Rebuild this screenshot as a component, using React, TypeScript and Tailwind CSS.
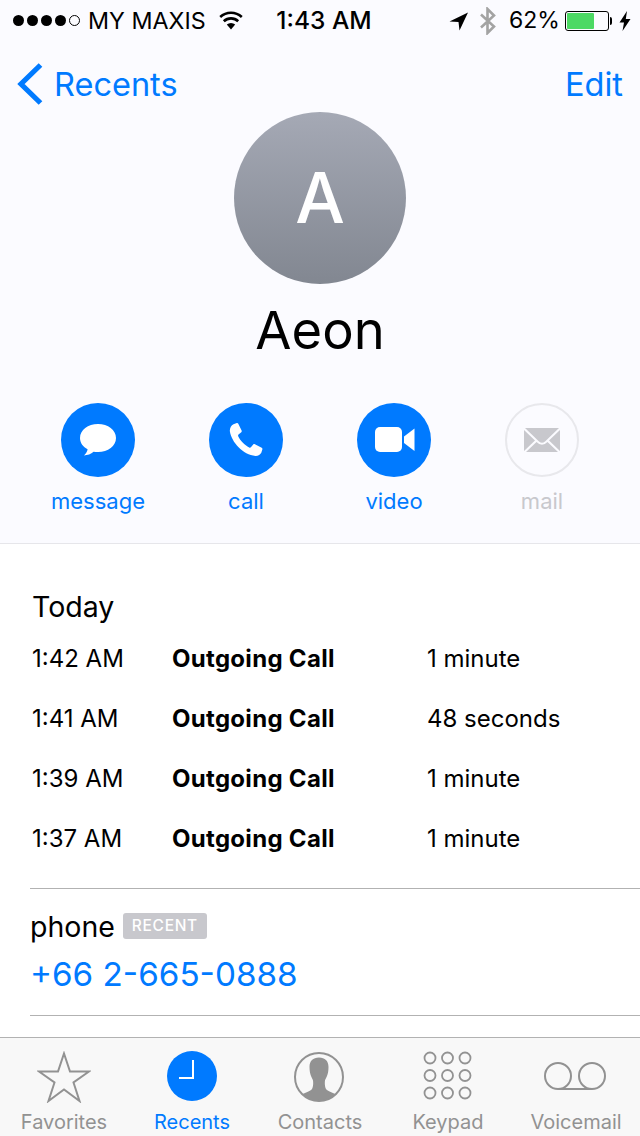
import React from 'react';

const calls = [
  { time: '1:42 AM', duration: '1 minute' },
  { time: '1:41 AM', duration: '48 seconds' },
  { time: '1:39 AM', duration: '1 minute' },
  { time: '1:37 AM', duration: '1 minute' },
];

function StatusBar() {
  return (
    <div className="flex h-[41px] items-center text-[23.3px] leading-none text-black">
      <div className="flex w-[270px] items-center pl-[13px]">
        <div className="flex gap-[3px]">
          {[0, 1, 2, 3].map((i) => (
            <span key={i} className="h-[11px] w-[11px] rounded-full bg-black" />
          ))}
          <span className="h-[11px] w-[11px] rounded-full border border-black" />
        </div>
        <span className="ml-[8px] whitespace-nowrap">MY MAXIS</span>
        <svg className="ml-[12px]" width="26" height="20" viewBox="0 0 26 20">
          <path d="M13 19.500 8.800 14.600a6.200 6.200 0 0 1 8.400 0Z" fill="#000" />
          <path d="M5.800 11.200a10.500 10.500 0 0 1 14.400 0M2.200 7a16 16 0 0 1 21.600 0" fill="none" stroke="#000" strokeWidth="2.600" />
        </svg>
      </div>
      <span className="w-[108px] text-center text-[24.5px] font-medium whitespace-nowrap">1:43 AM</span>
      <div className="flex flex-1 items-center">
        <svg className="ml-[71px]" width="20" height="20" viewBox="0 0 20 20">
          <path d="M19 1.500 0.500 10.500 9.500 11 10.500 19.500Z" fill="#000" />
        </svg>
        <svg className="ml-[9px]" width="20" height="28" viewBox="0 0 20 28">
          <path d="M3 7.500 16 19.500 9.500 26V2L16 8.500 3 20.500" fill="none" stroke="#a3a3a3" strokeWidth="2.600" />
        </svg>
        <span className="ml-[11px] text-[23px]">62%</span>
        <div className="ml-[5px] h-[20px] w-[44px] rounded-[3px] border border-black p-[1px]">
          <div className="h-full w-[27px] rounded-[1px] bg-[#4cd964]" />
        </div>
        <span className="ml-[1px] h-[8px] w-[2px] rounded-r-full bg-black" />
        <svg className="ml-[7px]" width="12" height="20" viewBox="0 0 12 20">
          <path d="M8 0 0.500 11.500H5L3.500 20 11.500 8H6.800Z" fill="#000" />
        </svg>
      </div>
    </div>
  );
}

function ActionButton({ label, disabled, children }: { label: string; disabled?: boolean; children: React.ReactNode }) {
  return (
    <div className="flex w-[148px] flex-col items-center">
      <div
        className={
          disabled
            ? 'flex h-[74px] w-[74px] items-center justify-center rounded-full border-2 border-[#e8e8ec]'
            : 'flex h-[74px] w-[74px] items-center justify-center rounded-full bg-[#007aff]'
        }
      >
        {children}
      </div>
      <span className={disabled ? 'mt-[11px] text-[22px] leading-[27px] text-[#c8c8cd]' : 'mt-[11px] text-[22px] leading-[27px] text-[#007aff]'}>
        {label}
      </span>
    </div>
  );
}

function TabItem({ label, active, children }: { label: string; active?: boolean; children: React.ReactNode }) {
  return (
    <div className="flex w-[128px] flex-col items-center">
      <div className="flex h-[72px] items-start justify-center pt-[13px]">{children}</div>
      <span className={active ? 'text-[20px] leading-[24px] whitespace-nowrap text-[#007aff]' : 'text-[20px] leading-[24px] whitespace-nowrap text-[#929292]'}>
        {label}
      </span>
    </div>
  );
}

export default function App() {
  return (
    <div className="flex h-[1136px] w-[640px] flex-col overflow-hidden bg-white font-['Inter',sans-serif]">
      <div className="h-[544px] border-b border-[#e6e6ea] bg-[#fbfbff]">
        <StatusBar />
        <div className="flex h-[71px] items-end justify-between px-[17px] pb-[6px] text-[32.5px] leading-[42px] text-[#007aff]">
          <div className="flex items-end">
            <svg className="mb-[1px]" width="26" height="42" viewBox="0 0 26 42">
              <path d="M23.500 2 4 21l19.500 19" fill="none" stroke="#007aff" strokeWidth="5.200" />
            </svg>
            <span className="ml-[11px]">Recents</span>
          </div>
          <span>Edit</span>
        </div>
        <div className="flex flex-col items-center">
          <div className="flex h-[172px] w-[172px] items-center justify-center rounded-full bg-gradient-to-b from-[#a5a9b5] to-[#828791] text-[70px] leading-none font-medium text-white">
            A
          </div>
          <div className="mt-[12px] text-[52.5px] leading-[68px] text-black">Aeon</div>
        </div>
        <div className="mt-[39px] flex pl-[24px]">
          <ActionButton label="message">
            <svg width="36" height="32" viewBox="0 0 36 32">
              <path d="M18 0C8 0 0 6 0 14c0 5 3.200 9 7.600 11.200-.4 2.200-1.600 4.400-3.600 6.200 3.400 0 7-1.400 9.600-3.600 1.400.2 2.900.2 4.400.2 10 0 18-6 18-14S28 0 18 0Z" fill="#fff" />
            </svg>
          </ActionButton>
          <ActionButton label="call">
            <svg width="34" height="34" viewBox="0 0 34 34">
              <path d="M4.500 1.200 7.800.1c.6-.2 1.200.1 1.500.6l3.300 6.900c.3.600.1 1.200-.3 1.600L9.500 11.600c-.5.500-.5 1.100-.3 1.700 1.800 4 6.500 9 11 11.200.6.300 1.300.2 1.700-.3l2.300-2.700c.4-.5 1.100-.6 1.700-.3l6.800 3.600c.6.300.9.900.7 1.500l-1.100 3.400C31.700 31.200 29 33 26.500 32.900 14 32 2.500 19 .9 8.500.5 5.500 2 2.500 4.500 1.200Z" fill="#fff" />
            </svg>
          </ActionButton>
          <ActionButton label="video">
            <svg className="ml-[2px]" width="40" height="26" viewBox="0 0 40 26">
              <rect x="0" y="0" width="27" height="25" rx="5" fill="#fff" />
              <path d="M29 9.500 39.500 1.500V24L29 16Z" fill="#fff" />
            </svg>
          </ActionButton>
          <ActionButton label="mail" disabled>
            <svg width="36" height="24" viewBox="0 0 36 24">
              <path d="M1 0H35L21 13.500Q18 16 15 13.500ZM0 2V23L11 12.500ZM36 2V23L25 12.500ZM2 24 12.500 14Q18 19.500 23.500 14L34 24Z" fill="#c8c8cd" />
            </svg>
          </ActionButton>
        </div>
      </div>

      <div className="flex-1 pl-[30px]">
        <div className="mt-[44px] pl-[2px] text-[28.5px] leading-[38px] text-black">Today</div>
        <div className="mt-[3px] pl-[2px]">
          {calls.map((call) => (
            <div key={call.time} className="flex h-[60px] items-center text-[24px] text-black">
              <span className="w-[140px]">{call.time}</span>
              <span className="w-[255px] font-bold tracking-[0.3px]">Outgoing Call</span>
              <span>{call.duration}</span>
            </div>
          ))}
        </div>
        <div className="mt-[19px] h-[128px] border-t border-b border-[#b2b2b2]">
          <div className="mt-[20px] flex items-center">
            <span className="text-[28.5px] leading-[36px] text-black">phone</span>
            <span className="mt-[-2px] ml-[8px] w-[84px] rounded-[3px] bg-[#c8c8cd] text-center text-[15.5px] leading-[26px] font-medium tracking-[0.7px] text-white">RECENT</span>
          </div>
          <div className="mt-[7px] text-[33.25px] leading-[44px] text-[#007aff]">+66 2-665-0888</div>
        </div>
      </div>

      <div className="flex h-[99px] border-t border-[#b2b2b2] bg-[#f8f8f8]">
        <TabItem label="Favorites">
          <svg width="54" height="52" viewBox="0 0 54 52">
            <path d="M27 2.500 33 20.500H52L36.500 31.500 42.500 50 27 38.500 11.500 50 17.500 31.500 2 20.500H21Z" fill="none" stroke="#929292" strokeWidth="2" />
          </svg>
        </TabItem>
        <TabItem label="Recents" active>
          <div className="flex h-[50px] w-[50px] items-start justify-center rounded-full bg-[#007aff]">
            <svg width="50" height="50" viewBox="0 0 50 50">
              <path d="M26 9V27H12" fill="none" stroke="#fff" strokeWidth="2" />
            </svg>
          </div>
        </TabItem>
        <TabItem label="Contacts">
          <svg className="-ml-[2px]" width="52" height="52" viewBox="0 0 52 52">
            <defs>
              <clipPath id="contact-clip">
                <circle cx="26" cy="26" r="24" />
              </clipPath>
            </defs>
            <path clipPath="url(#contact-clip)" d="M26 6.500c6 0 9.500 3.500 9.500 9.500 0 3.500-.5 6.500-1.500 9-.7 2-1.700 3-2 4.500-.4 3-.2 6 1 8.500 2 2.500 8 4 12 6.500V52H7V44.500c4-2.500 10-4 12-6.500 1.200-2.500 1.400-5.500 1-8.500-.3-1.500-1.300-2.500-2-4.500-1-2.500-1.500-5.500-1.500-9 0-6 3.500-9.500 9.500-9.500Z" fill="#929292" />
            <circle cx="26" cy="26" r="24" fill="none" stroke="#929292" strokeWidth="2" />
          </svg>
        </TabItem>
        <TabItem label="Keypad">
          <svg width="50" height="50" viewBox="0 0 50 50">
            {[7, 24.5, 42].map((cy) =>
              [7, 24.5, 42].map((cx) => (
                <circle key={`${cx}-${cy}`} cx={cx} cy={cy} r="5.500" fill="none" stroke="#929292" strokeWidth="1.800" />
              ))
            )}
          </svg>
        </TabItem>
        <TabItem label="Voicemail">
          <svg className="-ml-[2px]" width="64" height="50" viewBox="0 0 64 50">
            <circle cx="15" cy="25" r="13" fill="none" stroke="#929292" strokeWidth="2" />
            <circle cx="49" cy="25" r="13" fill="none" stroke="#929292" strokeWidth="2" />
            <path d="M15 38H49" fill="none" stroke="#929292" strokeWidth="2" />
          </svg>
        </TabItem>
      </div>
    </div>
  );
}
